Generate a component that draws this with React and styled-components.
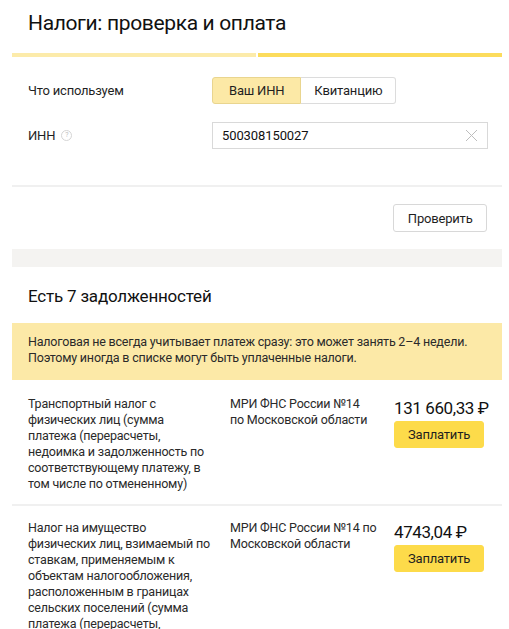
import React from "react";
import styled, { createGlobalStyle } from "styled-components";

const GlobalStyle = createGlobalStyle`
  html, body {
    margin: 0;
    padding: 0;
    background: #fff;
  }
  body {
    font-family: Roboto, "Noto Sans", sans-serif;
    color: #1f1f1f;
    -webkit-font-smoothing: antialiased;
  }
`;

const Page = styled.div`
  width: 490px;
  margin-left: 12px;
  background: #fff;
`;

const Header = styled.div`
  padding: 9px 16px 0;
`;

const Title = styled.h1`
  margin: 0;
  font-size: 21px;
  font-weight: 400;
  line-height: 28px;
  color: #111;
  letter-spacing: -0.35px;
`;

const Progress = styled.div`
  display: flex;
  gap: 2px;
  margin: 16px -16px 0;
  height: 4px;
`;

const ProgressPart = styled.div`
  flex: 1;
  background: ${(p) => (p.$done ? "#fcdc5c" : "#fcebaa")};
`;

const Form = styled.div`
  display: flex;
  flex-direction: column;
  gap: 18px;
  padding: 20px 16px 36px;
`;

const FieldRow = styled.div`
  display: grid;
  grid-template-columns: 184px 1fr;
  align-items: center;
`;

const Label = styled.div`
  display: flex;
  align-items: center;
  gap: 6px;
  font-size: 13px;
  color: #1f1f1f;
  letter-spacing: -0.2px;
`;

const Help = styled.span`
  display: inline-flex;
  align-items: center;
  justify-content: center;
  width: 9px;
  height: 9px;
  border: 1px solid #d5d5d5;
  border-radius: 50%;
  font-size: 7px;
  line-height: 1;
  color: #c0c0c0;
`;

const Segmented = styled.div`
  display: inline-flex;
  justify-self: start;
`;

const Segment = styled.button`
  height: 27px;
  padding: 0 ${(p) => (p.$first ? "16px" : "13px")};
  font: inherit;
  font-size: 13px;
  letter-spacing: -0.2px;
  color: #1f1f1f;
  cursor: pointer;
  background: ${(p) => (p.$active ? "#fce9a6" : "#fff")};
  border: 1px solid ${(p) => (p.$active ? "#e9d58f" : "#dcdcdc")};
  border-radius: ${(p) => (p.$first ? "3px 0 0 3px" : "0 3px 3px 0")};
  ${(p) => (p.$first ? "" : "border-left: none;")}
`;

const InputBox = styled.div`
  display: flex;
  align-items: center;
  width: 276px;
  height: 27px;
  box-sizing: border-box;
  border: 1px solid #d9d9d9;
  padding: 0 9px;
`;

const InputText = styled.span`
  flex: 1;
  font-size: 13px;
  letter-spacing: -0.1px;
  color: #111;
`;

const Divider = styled.div`
  height: 2px;
  background: #f0f0f0;
`;

const Actions = styled.div`
  display: flex;
  justify-content: flex-end;
  padding: 17px 15px 17px;
`;

const Button = styled.button`
  height: ${(p) => (p.$primary ? "27px" : "28px")};
  padding: 0 ${(p) => (p.$primary ? "13px" : "13.5px")};
  font: inherit;
  font-size: 13px;
  letter-spacing: -0.2px;
  color: #1f1f1f;
  cursor: pointer;
  border-radius: 3px;
  background: ${(p) => (p.$primary ? "#fddb4a" : "#fff")};
  border: 1px solid ${(p) => (p.$primary ? "#fddb4a" : "#d8d8d8")};
`;

const Band = styled.div`
  height: 18px;
  background: #f4f3f1;
`;

const DebtsTitle = styled.h2`
  margin: 0;
  padding: 17px 16px 15px;
  font-size: 17px;
  font-weight: 400;
  line-height: 24px;
  color: #111;
  letter-spacing: -0.2px;
`;

const Notice = styled.div`
  padding: 11px 16px 14px;
  background: #fce9a7;
  font-size: 12.5px;
  line-height: 16px;
  color: #2a2a2a;
  letter-spacing: -0.2px;
`;

const DebtRow = styled.div`
  display: grid;
  grid-template-columns: 202px 164px 1fr;
  padding: ${(p) => (p.$first ? "16px" : "14px")} 16px 12px;
  border-bottom: ${(p) => (p.$last ? "none" : "2px solid #f0f0f0")};
`;

const Cell = styled.div`
  font-size: 12.5px;
  line-height: 16px;
  color: #2a2a2a;
  letter-spacing: -0.2px;
  white-space: nowrap;
`;

const PayCell = styled.div`
  display: flex;
  flex-direction: column;
  align-items: flex-start;
  gap: 2px;
  margin-top: 1px;
`;

const Amount = styled.div`
  font-size: 17px;
  line-height: 22px;
  color: #111;
  letter-spacing: -0.4px;
  white-space: nowrap;
`;

const ClearIcon = () => (
  <svg width="13" height="13" viewBox="0 0 13 13">
    <path d="M1 1L12 12M12 1L1 12" stroke="#bdbdbd" strokeWidth="1" />
  </svg>
);

const debts = [
  {
    name: [
      "Транспортный налог с",
      "физических лиц (сумма",
      "платежа (перерасчеты,",
      "недоимка и задолженность по",
      "соответствующему платежу, в",
      "том числе по отмененному)",
    ],
    org: ["МРИ ФНС России №14", "по Московской области"],
    amount: "131 660,33 ₽",
  },
  {
    name: [
      "Налог на имущество",
      "физических лиц, взимаемый по",
      "ставкам, применяемым к",
      "объектам налогообложения,",
      "расположенным в границах",
      "сельских поселений (сумма",
      "платежа (перерасчеты,",
    ],
    org: ["МРИ ФНС России №14 по", "Московской области"],
    amount: "4743,04 ₽",
  },
];

const Lines = ({ lines }) =>
  lines.map((line, i) => (
    <React.Fragment key={i}>
      {line}
      {i < lines.length - 1 && <br />}
    </React.Fragment>
  ));

export default function App() {
  return (
    <Page>
      <GlobalStyle />
      <Header>
        <Title>Налоги: проверка и оплата</Title>
        <Progress>
          <ProgressPart />
          <ProgressPart $done />
        </Progress>
      </Header>

      <Form>
        <FieldRow>
          <Label>Что используем</Label>
          <Segmented>
            <Segment $first $active>
              Ваш ИНН
            </Segment>
            <Segment>Квитанцию</Segment>
          </Segmented>
        </FieldRow>
        <FieldRow>
          <Label>
            ИНН <Help>?</Help>
          </Label>
          <InputBox>
            <InputText>500308150027</InputText>
            <ClearIcon />
          </InputBox>
        </FieldRow>
      </Form>

      <Divider />
      <Actions>
        <Button>Проверить</Button>
      </Actions>
      <Band />

      <DebtsTitle>Есть 7 задолженностей</DebtsTitle>
      <Notice>
        Налоговая не всегда учитывает платеж сразу: это может занять 2–4 недели.
        <br />
        Поэтому иногда в списке могут быть уплаченные налоги.
      </Notice>

      {debts.map((d, i) => (
        <DebtRow key={i} $first={i === 0} $last={i === debts.length - 1}>
          <Cell>
            <Lines lines={d.name} />
          </Cell>
          <Cell>
            <Lines lines={d.org} />
          </Cell>
          <PayCell>
            <Amount>{d.amount}</Amount>
            <Button $primary>Заплатить</Button>
          </PayCell>
        </DebtRow>
      ))}
    </Page>
  );
}
